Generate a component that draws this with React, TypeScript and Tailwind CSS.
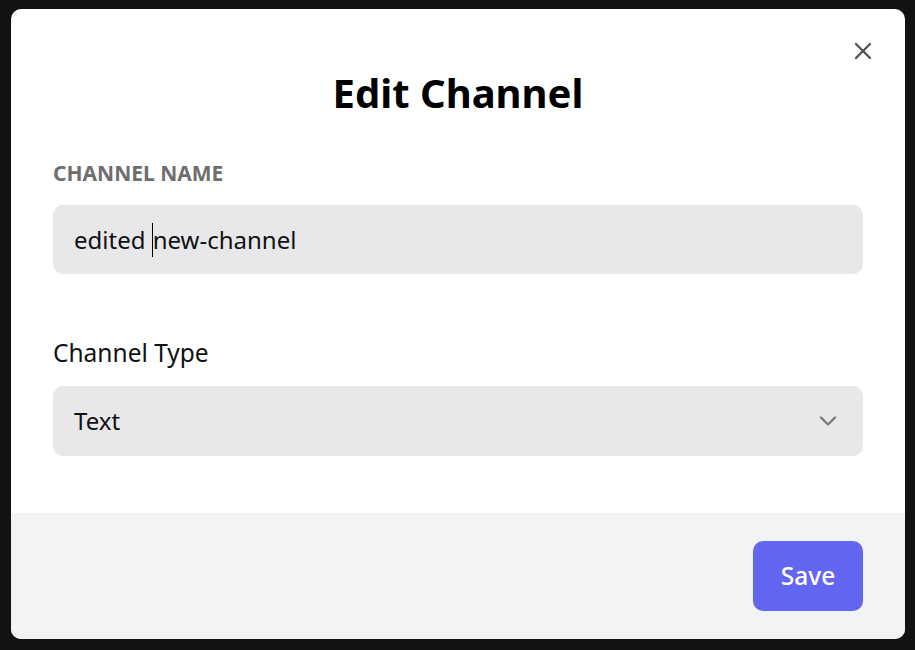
import { ChevronDown, X } from 'lucide-react'

export default function App() {
  return (
    <div
      className="h-[650px] w-[915px] overflow-hidden bg-[#121212] pl-[11px] pt-[9px]"
      style={{ fontFamily: '"Noto Sans", "Open Sans", sans-serif' }}
    >
      <div className="relative flex h-[630px] w-[894px] flex-col overflow-hidden rounded-[10px] bg-white text-black">
        <button
          type="button"
          className="absolute right-[28px] top-[28px] text-[#3f3f46] opacity-90"
        >
          <X className="h-[28px] w-[28px]" strokeWidth={2} />
        </button>

        <div className="px-[42px] pt-[56px]">
          <h1 className="text-center text-[40px] font-bold leading-[56px]">Edit Channel</h1>
        </div>

        <div className="mt-[38px] flex flex-1 flex-col px-[42px]">
          <label className="text-[21px] font-bold uppercase leading-[28px] text-[#6e6e6e]">
            Channel name
          </label>
          <div className="mt-[18px] flex h-[69px] items-center rounded-[10px] bg-[#e8e8ea] px-[21px] text-[24px] text-[#111]">
            <span className="whitespace-pre">edited </span>
            <span className="h-[34px] w-px bg-black" />
            <span>new-channel</span>
          </div>

          <label className="mt-[61px] text-[24.5px] leading-[35px] text-[#111]">Channel Type</label>
          <div className="mt-[16px] flex h-[70px] items-center justify-between rounded-[10px] bg-[#e8e8ea] px-[21px] text-[24px] text-[#111]">
            <span>Text</span>
            <ChevronDown className="h-[28px] w-[28px] opacity-50" strokeWidth={2} />
          </div>
        </div>

        <div className="flex h-[126px] items-center justify-end bg-[#f2f3f5] px-[42px]">
          <button
            type="button"
            className="h-[70px] w-[110px] rounded-[10px] bg-[#6366f1] text-[24.5px] font-medium text-white"
          >
            Save
          </button>
        </div>
      </div>
    </div>
  )
}
